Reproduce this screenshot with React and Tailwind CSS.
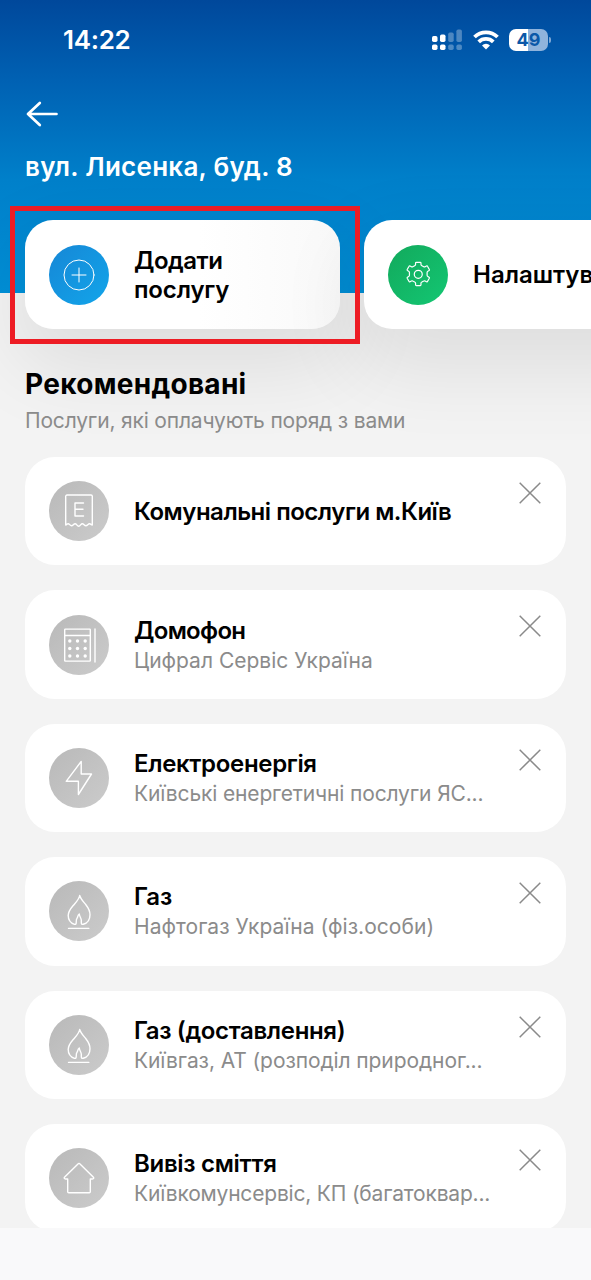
import React from 'react'

const services = [
    { icon: 'receipt', title: 'Комунальні послуги м.Київ', titleClass: 'tracking-[-0.48px]' },
    { icon: 'intercom', title: 'Домофон', titleClass: 'tracking-[-0.7px]', provider: 'Цифрал Сервіс Україна' },
    { icon: 'bolt', title: 'Електроенергія', titleClass: 'tracking-[-0.33px]', provider: 'Київські енергетичні послуги ЯС...', providerClass: 'tracking-[-0.15px]' },
    { icon: 'flame', title: 'Газ', provider: 'Нафтогаз Україна (фіз.особи)', providerClass: 'tracking-[0.05px]' },
    { icon: 'flame', title: 'Газ (доставлення)', titleClass: 'tracking-[-0.35px]', provider: 'Київгаз, АТ (розподіл природног...', providerClass: 'tracking-[-0.09px]' },
    { icon: 'house', title: 'Вивіз сміття', titleClass: 'tracking-[-0.3px]', provider: 'Київкомунсервіс, КП (багатоквар...', providerClass: 'tracking-[-0.19px]' },
]

// all glyphs share a 60x60 box, the same size as the circle behind them
const glyphs = {
    plus: (
        <>
            <circle cx="30" cy="30" r="15" />
            <path d="M30 23v14M23 30h14" />
        </>
    ),
    gear: (
        <g transform="translate(1.900 1) scale(.93)">
            <circle cx="30.5" cy="30.500" r="4.300" />
            <path d="M28.4 17.5h4.2c.5 0 .8.3.8.8v1.6c0 .6.4 1 1 1.300l2 1.100c.5.3 1 .3 1.500 0l1.400-.8c.4-.2.9-.1 1.100.3l2 3.500c.2.4.1.8-.3 1.100l-1.300.8c-.6.300-.8.800-.8 1.300v3c0 .6.2 1 .8 1.300l1.300.8c.4.300.5.700.300 1.100l-2 3.500c-.2.4-.7.500-1.100.300l-1.400-.8c-.5-.3-1-.3-1.500 0l-2 1.100c-.6.300-1 .700-1 1.300v1.600c0 .5-.3.800-.8.800h-4.200c-.5 0-.8-.3-.8-.8v-1.600c0-.6-.4-1-1-1.300l-2-1.100c-.5-.3-1-.3-1.500 0l-1.400.8c-.4.200-.9.100-1.100-.3l-2-3.500c-.2-.4-.1-.8.300-1.100l1.300-.8c.6-.3.800-.8.800-1.300v-3c0-.5-.2-1-.8-1.300l-1.300-.8c-.4-.3-.5-.7-.3-1.100l2-3.500c.2-.4.700-.5 1.100-.3l1.400.8c.5.300 1 .300 1.500 0l2-1.100c.6-.3 1-.7 1-1.300v-1.600c0-.5.300-.8.800-.8z" />
        </g>
    ),
    receipt: (
        <>
            <path d="M18 14h24a1.300 1.300 0 0 1 1.300 1.300V44c-1.200 0-1.500-1.300-2.700-1.300-1.700 0-2 2-3.700 2s-2-2-3.600-2c-1.600 0-1.800 2.500-3.600 2.500s-2-2.500-3.600-2.500-1.900 2-3.600 2-1.900-2-3.400-2c-1.100 0-1.300 1.300-2.400 1.300V15.300A1.300 1.300 0 0 1 18 14z" />
            <path d="M34.500 22H26v13h8.500M26 28.300h8" />
        </>
    ),
    intercom: (
        <>
            <rect x="15.700" y="14.100" width="25.600" height="32" rx=".6" />
            <path d="M15.700 20.500h25.600M46 14v33" />
            <g fill="white" stroke="none">
                {[26, 33.5, 41].map((cy) =>
                    [20.800, 28.500, 36.200].map((cx) => <circle key={`${cx}-${cy}`} cx={cx} cy={cy} r="1.700" />)
                )}
            </g>
        </>
    ),
    bolt: <path d="M32.200 13.400 17.200 33.300h12.200v13.200L42.500 26H32.200z" />,
    flame: (
        <>
            <path d="M25.500 43.300c-3.800-1.300-6.300-4.300-6.300-8.800 0-4 2-6.500 5-10 3.500-4 6-6.300 6.500-10 1 3.500 3.500 6 6 9 3 3.800 4.300 6.500 4.300 10.300 0 5-3 8.500-6.800 9.500-1.200.3-1.900-.2-1.900-1.500v-2.500c0-2.500-1.700-3-2-6.300-2 1.500-1.200 3.300-2.300 4.300-.8.700-.8 2.300-.8 4.500 0 1.200-.6 1.800-1.700 1.500z" />
            <path d="M19.500 47.400h20.300" />
        </>
    ),
    house: <path d="M29.500 15.600 15.700 28.900c-1 1-.5 2.100.9 2.100h2.100v12.700a1 1 0 0 0 1 1h20.600a1 1 0 0 0 1-1V31h2.100c1.400 0 1.800-1.100.8-2.100L30.500 15.600a.7.7 0 0 0-1 0z" />,
}

const RoundIcon = ({ name, className }) => (
    <div className={`w-[60px] h-[60px] rounded-full shrink-0 bg-linear-to-br ${className}`}>
        <svg viewBox="0 0 60 60" className="w-full h-full" fill="none" stroke="white" strokeLinecap="round" strokeLinejoin="round">
            {glyphs[name]}
        </svg>
    </div>
)

const StatusBar = () => (
    <div className="flex items-center justify-between h-[79px] pl-[63px] pr-[40px] text-white">
        <span className="text-[26px] leading-none font-semibold tracking-[-0.3px]">14:22</span>
        <div className="flex items-center">
            <svg width="30" height="22" viewBox="0 0 30 22" fill="white">
                <rect x="0" y="7" width="5.500" height="6" rx="1.700" />
                <rect x="8" y="5.500" width="5.500" height="7.500" rx="1.700" />
                <g opacity=".3">
                    <rect x="16.200" y="3.500" width="5.500" height="9.500" rx="1.700" />
                    <rect x="24.400" y=".5" width="5.500" height="12.500" rx="1.700" />
                    <rect x="16.200" y="15.500" width="5.500" height="5.500" rx="1.700" />
                    <rect x="24.400" y="15.500" width="5.500" height="5.500" rx="1.700" />
                </g>
                <rect x="0" y="15.500" width="5.500" height="5.500" rx="1.700" />
                <rect x="8" y="15.500" width="5.500" height="5.500" rx="1.700" />
            </svg>
            <svg width="26" height="20" viewBox="0 0 26 20" className="ml-[11px]" fill="none" stroke="white" strokeWidth="3.800">
                <path d="M1.500 7a16.500 16.500 0 0 1 23 0" />
                <path d="M5.700 11.800a10.500 10.500 0 0 1 14.600 0" />
                <path d="M13 19.500 9 15.400a5.700 5.700 0 0 1 8 0z" fill="white" stroke="none" />
            </svg>
            <div className="flex items-center ml-[10px]">
                <div className="flex items-center justify-center w-[39px] h-[22px] rounded-[7px] bg-linear-to-r from-white from-50% to-[#8fb3dc] to-50%">
                    <span className="text-[18px] leading-none font-bold text-[#0a58a8]">49</span>
                </div>
                <div className="w-[2px] h-[6px] ml-px rounded-r-full bg-[#7fa8d6]" />
            </div>
        </div>
    </div>
)

const ActionCard = ({ icon, iconClass, className, children }) => (
    <div className={`flex items-center h-[109px] shrink-0 pl-6 rounded-[28px] shadow-[0_30px_80px_10px_rgba(0,0,0,0.085)] ${className}`}>
        <RoundIcon name={icon} className={iconClass} />
        <p className="ml-[25px] text-2xl leading-[29px] font-semibold whitespace-nowrap">{children}</p>
    </div>
)

const ServiceCard = ({ service }) => (
    <div className="flex items-center h-[108.4px] shrink-0 pl-6 pr-[25px] rounded-[30px] bg-white">
        <RoundIcon name={service.icon} className="stroke-[1.4px] from-[#b9b9b9] to-[#cbcbcb]" />
        <div className="ml-[25px] pt-[2px] grow whitespace-nowrap">
            <h3 className={`text-2xl leading-[30px] font-semibold ${service.titleClass || ''}`}>{service.title}</h3>
            {service.provider && (
                <p className={`text-[21px] leading-[30px] text-[#8b8b8b] ${service.providerClass || ''}`}>{service.provider}</p>
            )}
        </div>
        <button type="button" aria-label="Закрити" className="self-start mt-[25px] shrink-0">
            <svg width="22" height="22" viewBox="0 0 22 22" stroke="#8a8a8a" strokeWidth="1.500">
                <path d="M.7.700l20.600 20.600M21.300.700.700 21.300" />
            </svg>
        </button>
    </div>
)

const App = () => {
    return (
        <div className="relative flex flex-col w-[591px] h-[1280px] overflow-hidden bg-[#f3f3f3] bg-[linear-gradient(to_bottom,#00489b_0px,#0061b3_80px,#0080ca_180px,#0090d8_293px,transparent_293px)] font-['Inter','Liberation_Sans',sans-serif] text-black">
            <StatusBar />
            <header className="h-[141px] pl-[25px] text-white">
                <svg width="34" height="28" viewBox="0 0 34 28" className="mt-[21px]" fill="none" stroke="white" strokeWidth="2.700" strokeLinecap="round" strokeLinejoin="round">
                    <path d="M31.500 14H3M14.800 3 3 14l11.800 11" />
                </svg>
                <h1 className="mt-[23px] text-[26px] leading-[32px] font-semibold tracking-[0.27px] whitespace-nowrap">вул. Лисенка, буд. 8</h1>
            </header>

            <div className="flex gap-6 pl-[25px]">
                <ActionCard icon="plus" iconClass="stroke-1 from-[#1687d6] to-[#12a5ea]" className="w-[315px] bg-linear-to-r from-white from-55% to-[#f9f9f9]">
                    <span className="tracking-[-0.5px]">Додати</span><br /><span className="tracking-[-0.15px]">послугу</span>
                </ActionCard>
                <ActionCard icon="gear" iconClass="stroke-[1.3px] from-[#12a95c] to-[#13c773]" className="w-[315px] bg-white">
                    Налаштування
                </ActionCard>
            </div>

            <section className="mt-[37px] px-[25px]">
                <h2 className="text-[28px] leading-[36px] font-bold tracking-[0.3px]">Рекомендовані</h2>
                <p className="text-[21px] leading-[30px] tracking-[-0.18px] text-[#8b8b8b] whitespace-nowrap mt-[4px]">Послуги, які оплачують поряд з вами</p>
                <div className="flex flex-col gap-[25px] mt-[21px]">
                    {services.map((service) => (
                        <ServiceCard key={service.title} service={service} />
                    ))}
                </div>
            </section>

            {/* bottom safe area */}
            <div className="absolute inset-x-0 bottom-0 h-[52px] bg-[#f9f9fa]" />
            <div className="absolute left-[10px] top-[206px] w-[350px] h-[138px] border-5 border-[#ed1c24]" />
        </div>
    )
}

export default App
